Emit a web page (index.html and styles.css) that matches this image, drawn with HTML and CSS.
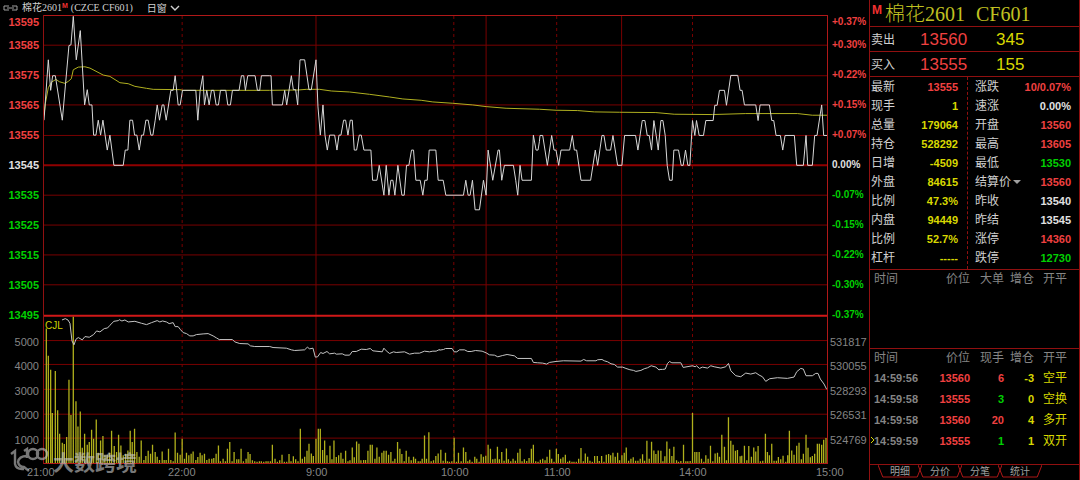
FILE: index.html
```html
<!DOCTYPE html>
<html lang="zh-CN">
<head>
<meta charset="utf-8">
<title>棉花2601 CF601</title>
<link rel="stylesheet" href="styles.css">
</head>
<body>
<div class="app">
  <main class="main">
    <header class="topbar">
      <svg class="link-icon" viewBox="0 0 15 6"><path d="M6 1H1V5H6M9 1H14V5H9M4 3H11"/></svg>
      <h1 class="topbar-title">棉花2601<sup class="flag">M</sup><span>(CZCE CF601)</span></h1>
      <button class="window-menu" type="button">日窗<svg class="chevron" viewBox="0 0 10 6"><path d="M1 1L5 5L9 1"/></svg></button>
    </header>
    <section class="chart">
      <div class="axis axis-left">
        <span class="up">13595</span><span class="up">13585</span><span class="up">13575</span><span class="up">13565</span><span class="up">13555</span><span class="flat">13545</span><span class="down">13535</span><span class="down">13525</span><span class="down">13515</span><span class="down">13505</span><span class="down">13495</span>
        <span class="vol">5000</span><span class="vol">4000</span><span class="vol">3000</span><span class="vol">2000</span><span class="vol">1000</span>
      </div>
      <div class="plot">
        <svg class="plot-svg" id="plot" viewBox="132 46 2352 1347" preserveAspectRatio="none">
          <path class="grid" d="M132 134H2484M132 226H2484M132 314H2484M132 406H2484M132 586H2484M132 676H2484M132 766H2484M132 856H2484M132 1024H2484M132 1096H2484M132 1171H2484M132 1246H2484M132 1318H2484M949 46V1393M1460 46V1393M1867 46V1393"/>
          <path class="hours" d="M547 46V1393M1363 46V1393M1672 46V1393M2080 46V1393"/>
          <path class="mid" d="M132 496H2484"/>
          <path class="frame" d="M132 949H2484"/>
        </svg>
        <span class="indicator">CJL</span>
      </div>
      <div class="axis axis-right">
        <span class="up">+0.37%</span><span class="up">+0.30%</span><span class="up">+0.22%</span><span class="up">+0.15%</span><span class="up">+0.07%</span><span class="flat">0.00%</span><span class="down">-0.07%</span><span class="down">-0.15%</span><span class="down">-0.22%</span><span class="down">-0.30%</span><span class="down">-0.37%</span>
        <span class="vol">531817</span><span class="vol">530055</span><span class="vol">528293</span><span class="vol">526531</span><span class="vol">524769</span>
      </div>
    </section>
    <footer class="times"><span>21:00</span><span>22:00</span><span>9:00</span><span>10:00</span><span>11:00</span><span>14:00</span><span>15:00</span></footer>
    <div class="watermark">
      <svg class="mark" viewBox="0 0 40 28"><path d="M2 7L6 4V17Q7 22 13 22H15M18 9Q10 9 9 15Q10 20 15 20L20 24M15 4L18 2V11"/><circle cx="24" cy="7" r="5"/><circle cx="33" cy="7" r="5"/></svg>
      <span>大数跨境</span>
    </div>
  </main>
  <aside class="side">
    <h2 class="contract"><sup class="flag">M</sup><span>棉花2601</span><span>CF601</span></h2>
    <div class="book"><span>卖出</span><b class="up">13560</b><b class="qty">345</b></div>
    <div class="book"><span>买入</span><b class="up">13555</b><b class="qty">155</b></div>
    <div class="quotes">
      <dl class="col">
        <div><dt>最新</dt><dd class="up">13555</dd></div>
        <div><dt>现手</dt><dd class="qty">1</dd></div>
        <div><dt>总量</dt><dd class="qty">179064</dd></div>
        <div><dt>持仓</dt><dd class="qty">528292</dd></div>
        <div><dt>日增</dt><dd class="qty">-4509</dd></div>
        <div><dt>外盘</dt><dd class="qty">84615</dd></div>
        <div><dt>比例</dt><dd class="qty">47.3%</dd></div>
        <div><dt>内盘</dt><dd class="qty">94449</dd></div>
        <div><dt>比例</dt><dd class="qty">52.7%</dd></div>
        <div><dt>杠杆</dt><dd class="qty">-----</dd></div>
      </dl>
      <dl class="col">
        <div><dt>涨跌</dt><dd class="up">10/0.07%</dd></div>
        <div><dt>速涨</dt><dd class="flat">0.00%</dd></div>
        <div><dt>开盘</dt><dd class="up">13560</dd></div>
        <div><dt>最高</dt><dd class="up">13605</dd></div>
        <div><dt>最低</dt><dd class="down">13530</dd></div>
        <div><dt><button class="settle" type="button">结算价<svg class="caret" viewBox="0 0 8 4"><path d="M0 0H8L4 4Z"/></svg></button></dt><dd class="up">13560</dd></div>
        <div><dt>昨收</dt><dd class="flat">13540</dd></div>
        <div><dt>昨结</dt><dd class="flat">13545</dd></div>
        <div><dt>涨停</dt><dd class="up">14360</dd></div>
        <div><dt>跌停</dt><dd class="down">12730</dd></div>
      </dl>
    </div>
    <div class="panel">
      <table class="ticks">
        <thead><tr><th>时间</th><th>价位</th><th>大单</th><th>增仓</th><th>开平</th></tr></thead>
      </table>
    </div>
    <div class="panel panel-ticks">
      <table class="ticks">
        <thead><tr><th>时间</th><th>价位</th><th>现手</th><th>增仓</th><th>开平</th></tr></thead>
        <tbody>
          <tr><td>14:59:56</td><td class="up">13560</td><td class="up">6</td><td class="qty">-3</td><td class="qty">空平</td></tr>
          <tr><td>14:59:58</td><td class="up">13555</td><td class="down">3</td><td class="qty">0</td><td class="qty">空换</td></tr>
          <tr><td>14:59:58</td><td class="up">13560</td><td class="up">20</td><td class="qty">4</td><td class="qty">多开</td></tr>
          <tr class="current"><td>14:59:59<svg class="pointer" viewBox="0 0 5 8"><path d="M1 1L4 4L1 7"/></svg></td><td class="up">13555</td><td class="down">1</td><td class="qty">1</td><td class="qty">双开</td></tr>
        </tbody>
      </table>
    </div>
    <nav class="tabs">
      <button class="tab" type="button"><svg viewBox="0 0 46 13" preserveAspectRatio="none"><path d="M0 0L5 12H41L46 0"/></svg>明细</button>
      <button class="tab" type="button"><svg viewBox="0 0 46 13" preserveAspectRatio="none"><path d="M0 0L5 12H41L46 0"/></svg>分价</button>
      <button class="tab" type="button"><svg viewBox="0 0 46 13" preserveAspectRatio="none"><path d="M0 0L5 12H41L46 0"/></svg>分笔</button>
      <button class="tab" type="button"><svg viewBox="0 0 46 13" preserveAspectRatio="none"><path d="M0 0L5 12H41L46 0"/></svg>统计</button>
    </nav>
  </aside>
</div>
<script src="chart.js"></script>
</body>
</html>
```
FILE: styles.css
```css
* { box-sizing: border-box; }

body {
  margin: 0;
  background: #000;
  color: #d0d0d0;
  font: 11px/14px "Liberation Sans", "Noto Sans CJK SC", sans-serif;
}

h1, h2, dl, dd { margin: 0; }
button {
  margin: 0;
  padding: 0;
  border: 0;
  background: none;
  color: inherit;
  font: inherit;
}
svg { fill: none; }

.up { color: #f04040; }
.down { color: #00d000; }
.flat { color: #e0e0e0; }
.qty { color: #d8d800; }
.flag { color: #f03030; }

.app {
  display: grid;
  grid-template-columns: minmax(0, 1fr) 211px;
  min-height: 100vh;
}

.main {
  position: relative;
  display: flex;
  flex-direction: column;
}

.topbar {
  display: flex;
  align-items: center;
  height: 15px;
  padding-left: 3px;
}
.link-icon { width: 15px; height: 6px; stroke: #a0a0a0; }
.topbar-title {
  display: flex;
  margin-left: 4px;
  font: 10px/14px "Liberation Serif", "Noto Sans CJK SC", serif;
}
.topbar-title .flag {
  margin-right: 3px;
  font: bold 7px/10px "Liberation Sans", sans-serif;
}
.window-menu {
  display: flex;
  align-items: center;
  gap: 3px;
  margin-left: 14px;
  font: 10px/14px "Noto Sans CJK SC", sans-serif;
}
.chevron { width: 10px; height: 6px; stroke: #d0d0d0; stroke-width: 1.4; }

.chart {
  flex: 1;
  display: grid;
  grid-template-columns: 44px minmax(0, 1fr) 41px;
}
.axis {
  display: grid;
  grid-template-rows: 15fr repeat(10, 30fr) repeat(5, 24.5fr) 12fr;
  align-items: center;
  font-weight: bold;
  line-height: 12px;
}
.axis-left { padding-right: 5px; text-align: right; }
.axis-right { padding-left: 4px; font-size: 10px; }
.vol { color: #858585; font-size: 11px; font-weight: normal; }
.axis-right .vol { margin-left: -2px; }

.plot {
  position: relative;
  border: solid #b01818;
  border-width: 1px 1px 1px 0;
  box-shadow: -1px 0 #901010;
}
.plot-svg { position: absolute; width: 100%; height: 100%; }
.plot-svg path, .plot-svg polyline { vector-effect: non-scaling-stroke; }
.grid { stroke: #780000; }
.hours { stroke: #780000; stroke-dasharray: 3 3; }
.mid { stroke: #900000; stroke-width: 2; }
.frame { stroke: #d01818; stroke-width: 2; }
.bars { stroke: #b0b01c; stroke-width: 1.3; }
.price { stroke: #d8d8d8; }
.interest { stroke: #c4c4c4; }
.average { stroke: #b0b020; }
.indicator {
  position: absolute;
  top: 68%;
  left: 1px;
  color: #d0d000;
  font: 10px/12px "Liberation Sans", sans-serif;
}

.times {
  display: grid;
  grid-template-columns: 141fr 138fr 135fr 103fr 135fr 137fr 53fr;
  height: 16px;
  padding-left: 27px;
  color: #858585;
  line-height: 17px;
}

.watermark {
  position: absolute;
  bottom: 5px;
  left: 9px;
  display: flex;
  align-items: center;
  gap: 4px;
  color: #c8c8c8;
  font: bold 21px/28px "Noto Sans CJK SC", sans-serif;
  opacity: 0.6;
}
.mark { width: 40px; height: 28px; stroke: #c8c8c8; stroke-width: 2.4; }

.side {
  display: grid;
  grid-template-rows: 26px 25px 25px 193px 79px 1fr 15px;
  border: solid #901010;
  border-width: 0 1px;
}
.contract {
  display: flex;
  align-items: center;
  padding-top: 2px;
  color: #c0c020;
  font: 20px/24px "Liberation Serif", "Noto Sans CJK SC", serif;
  font-weight: 300;
}
.contract span + span { margin-left: 11px; }
.contract .flag {
  align-self: flex-start;
  width: 15px;
  padding: 2px 0 0 2px;
  font: bold 12px/12px "Liberation Sans", sans-serif;
}
.book {
  display: grid;
  grid-template-columns: 49px 76px 1fr;
  align-items: center;
  padding: 2px 0 0 1px;
  border-top: 1px solid #901010;
  font-size: 12px;
}
.book b { font-size: 17px; font-weight: normal; }

.quotes {
  display: grid;
  grid-template-columns: 97px 1fr;
  border-top: 1px solid #901010;
}
.col { display: flex; flex-direction: column; padding: 0 9px 1px 1px; }
.col + .col { padding: 0 8px 1px 7px; border-left: 1px dashed #901010; }
.col div {
  flex: 1;
  display: flex;
  align-items: center;
  justify-content: space-between;
}
.col dt { font-size: 12px; }
.col dd { font-weight: bold; }
.settle { display: flex; align-items: center; gap: 2px; }
.caret { width: 8px; height: 4px; fill: #a0a0a0; }

.panel { border-top: 1px solid #901010; }
.panel-ticks { border-bottom: 1px solid #901010; }
.ticks {
  width: 100%;
  border-collapse: collapse;
  table-layout: fixed;
  color: #858585;
}
.ticks th, .ticks td { height: 21px; padding: 0; text-align: right; }
.ticks th { height: 18px; font-size: 12px; font-weight: normal; }
.ticks td { font-weight: bold; }
.ticks th:nth-child(1) { width: 60px; }
.ticks th:nth-child(2) { width: 40px; }
.ticks th:nth-child(3) { width: 34px; }
.ticks th:nth-child(4) { width: 30px; }
.ticks tr > :nth-child(1) { padding-left: 4px; text-align: left; }
.ticks tr > :nth-child(5) { padding-right: 12px; font-size: 12px; font-weight: normal; }
.current td:first-child { position: relative; }
.pointer {
  position: absolute;
  top: 6px;
  left: 0;
  width: 5px;
  height: 8px;
  stroke: #d8d800;
}

.tabs { display: flex; align-items: flex-start; padding-left: 8px; }
.tab {
  position: relative;
  width: 44px;
  height: 14px;
  margin-right: -4px;
  color: #a0a0a0;
  font-size: 10px;
  line-height: 12px;
}
.tab svg {
  position: absolute;
  inset: 0;
  width: 100%;
  height: 13px;
  stroke: #b01818;
}
```
FILE: chart.js
```js
const plot = document.getElementById("plot");
const SVG_NS = "http://www.w3.org/2000/svg";

// Each block covers one stretch of the session, starting at (x, y) in plot units.
const price = [
  { x: 0, y: 0, points: "132,360 145,178 152,270 158,226 166,226 187,360 207,135 213,133 220,47 229,178 241,90 254,314 262,268 268,314 276,314 281,405 288,405 295,360 302,405 309,360 322,450 330,405 342,496 370,496 376,450 384,450 390,360 398,360 404,405 411,405 418,450 425,405 431,405 438,360 445,360 453,405 459,405 466,360 472,314 479,360 487,314 492,314 499,360 513,270 520,270 526,226 535,314 541,314 548,270 588,270 594,360 601,270 609,226 614,314 621,270 628,314 635,270 642,270 649,314 656,314 662,270 678,270 684,314 692,314 698,270 718,270 725,226 732,226 737,270 744,226 766,226 773,270 780,270 785,226 810,226" },
  { x: 810, y: 0, points: "0,226 4,226 8,314 38,314 45,270 51,314 65,226 71,268 78,268 84,314 91,178 105,178 118,268 125,268 139,178 145,320 152,405 160,314 166,405 173,450 180,405 195,405 202,450 208,405 214,405 222,360 228,360 235,405 242,360 248,360 254,450 261,450 269,405 275,405 283,450 304,450 309,541 322,541 329,496 343,586 350,496 358,586 364,541 370,541 376,586 385,496 397,586 404,586 411,496 418,496 426,450 432,450 439,541 452,541 460,586 466,541 473,541 479,450 499,450 506,541 521,541 529,586 582,586 589,541 596,586 602,586 609,541 617,630 630,630 642,541 650,586 656,450 670,541 686,450 690,450 697,541 705,496 732,496 739,541 745,586 752,496 758,541 786,541 792,405 800,450 806,450 810,425" },
  { x: 1620, y: 180, points: "0,245 2,226 10,226 24,316 37,226 44,270 50,270 58,316 65,270 91,270 99,226 105,270 112,270 125,361 154,361 161,316 168,270 175,316 188,226 194,226 201,270 214,270 221,226 235,316 248,316 256,226 289,226 296,270 309,181 317,181 324,226 330,226 337,270 344,181 351,226 357,270 365,181 371,181 378,226 384,316 391,361 399,361 404,270 418,270 426,316 432,316 439,270 446,316 452,316 460,181 467,226 472,181 480,226 493,226 500,181 522,181 527,135 534,135 541,90 556,90 562,135 575,45 596,45 603,90 609,90 616,134 650,134 657,181 663,134 691,134 698,181 704,181 711,226 724,226 731,270 738,226 766,226 773,316 793,316 801,226 806,316 820,316 827,226 834,226 848,134 854,226 864,226" }
];

const average = [
  { x: 0, y: 0, points: "132,345 136,310 145,262 155,245 168,237 178,244 195,249 205,243 214,235 220,208 235,200 255,199 270,203 310,224 330,228 360,247 385,250 405,258 440,264 460,267 540,268 550,270 810,270" },
  { x: 810, y: 0, points: "0,270 85,269 110,267 150,267 185,272 240,275 300,282 360,290 400,296 455,300 490,305 550,309 610,314 650,319 710,324 810,327" },
  { x: 1620, y: 180, points: "0,147 50,150 115,151 165,155 240,156 350,157 405,162 520,163 620,160 775,160 820,165 864,165" }
];

const interest = [
  { x: 0, y: 900, points: "186,62 196,58 204,62 210,72 216,125 222,137 228,120 235,115 247,122 255,112 268,114 281,106 290,95 300,98 313,88 323,86 330,78 342,66 355,64 358,61 366,65 375,62 385,68 405,66 425,72 440,76 455,70 472,64 480,68 488,65 500,68 508,73 520,70 526,82 535,82 541,90 550,100 560,103 570,110 580,110 590,106 610,104 625,103 640,110 650,116 660,122" },
  { x: 660, y: 930, points: "0,91 38,91 45,98 60,103 85,104 92,110 105,112 150,112 160,115 200,117 215,122 225,124 255,122 263,114 270,119 280,117 287,144 294,143 303,130 310,133 322,127 330,134 345,132 350,135 368,134 376,138 390,138 398,127 410,127 425,120 440,121 452,118 460,125 488,128 493,117 500,125 510,133 522,128 530,130 555,128 570,135 585,132 600,132 615,126 630,128 640,126 650,126 660,121" },
  { x: 1320, y: 930, points: "0,123 12,121 18,118 38,118 44,128 52,128 60,122 75,122 85,127 95,127 108,124 128,126 140,131 150,137 165,138 175,143 190,139 203,136 225,140 235,148 276,148 282,160 295,161 310,162 322,165 330,160 350,157 372,155 425,156 433,151 442,155 470,155 475,152 488,151 495,155 505,158 515,164 525,166 535,174 550,174 560,178 572,182 583,184 590,187 605,184 615,179 625,176 636,170 650,174 660,183" },
  { x: 1980, y: 930, points: "0,181 10,181 18,180 25,163 31,157 38,161 65,161 72,175 100,170 108,173 112,170 121,178 130,174 145,177 155,170 165,173 185,177 200,173 208,163 215,185 230,200 245,203 260,192 275,195 290,191 300,198 310,203 320,217 332,209 355,206 385,208 405,204 413,188 425,178 433,180 441,200 460,200 470,193 477,193 484,210 495,225 503,241" }
];

const volume = [
  { x: 0, y: 900, points: "139,88 145,170 152,212 157,342 166,216 173,334 179,405 187,432 193,436 200,415 207,242 213,348 220,52 228,307 234,383 241,338 247,447 254,405 262,438 268,430 275,393 281,420 289,362 295,462 302,425 309,412 315,470 322,468 329,462 335,396 343,442 350,460 356,408 363,440 370,470 377,465 384,455 391,396 397,430 404,390 411,460 418,474 424,425 432,484 438,472 445,456 452,465 458,438 466,460 472,474 479,484 487,458 493,484 499,484 506,450 513,484 520,488 526,401 533,462 541,468 547,420 554,480 560,462 567,470 574,465 580,458 588,484 594,475 601,462 607,470 614,465 621,484 628,480 636,480 642,478 649,465 656,440" },
  { x: 660, y: 930, points: "2,458 10,450 17,458 23,420 30,400 37,458 43,430 51,452 57,452 64,420 71,458 79,450 85,430 91,436 98,455 105,458 112,459 119,458 125,458 132,459 139,458 145,458 152,458 158,408 166,450 173,459 180,455 187,438 194,459 201,459 208,436 214,458 221,443 228,452 235,458 242,360 248,450 255,444 262,426 268,405 275,434 281,442 289,390 296,360 302,360 309,424 315,395 322,440 331,411 337,452 343,395 350,445 357,440 364,432 370,450 378,426 385,458 391,455 398,416 404,446 411,398 418,405 424,455 432,454 438,454 445,426 452,408 458,408 466,450 472,416 479,444 487,432 493,426 500,426 507,438 514,430 520,458 526,450 534,400 541,420 547,436 554,458 560,426 568,444 575,455 582,444 588,450 596,458 602,458 608,450 615,380 621,450 628,370 635,458 642,455 649,442 656,434" },
  { x: 1320, y: 930, points: "4,423 11,456 18,432 24,458 30,459 37,458 44,387 51,459 57,432 65,458 72,416 79,430 85,458 91,453 98,459 106,444 112,450 119,459 125,437 132,444 139,441 146,408 153,420 160,452 167,450 174,414 180,452 187,430 194,456 201,419 207,452 214,458 221,450 228,456 235,432 242,420 248,458 255,452 262,457 269,448 276,420 282,408 289,458 296,459 303,453 310,450 317,455 323,444 331,423 337,450 344,459 351,420 357,436 364,450 371,446 378,438 385,459 391,456 398,459 404,459 411,459 418,450 425,418 432,458 438,434 445,444 452,456 459,459 466,442 474,442 480,457 487,442 494,459 501,438 508,436 514,440 521,432 528,444 535,432 541,455 548,440 555,432 561,416 568,456 575,450 582,446 589,456 596,456 603,450 610,437 616,456 623,396 630,450 637,399 644,425 650,436 657,425" },
  { x: 1980, y: 930, points: "5,426 11,458 17,443 23,398 31,420 38,442 44,414 52,455 58,459 65,457 73,408 80,458 86,458 93,457 100,312 107,430 113,430 120,430 127,450 134,459 140,440 147,450 154,411 161,458 168,434 175,432 181,444 188,378 196,414 202,455 208,325 215,396 222,408 229,426 235,424 243,443 248,441 256,411 263,455 269,412 277,444 284,416 290,428 297,412 304,458 311,456 319,375 325,430 331,440 338,405 345,456 352,456 358,445 365,452 372,441 380,459 386,440 391,366 398,425 405,438 413,411 420,402 427,452 433,435 441,378 447,417 454,446 460,442 467,435 475,405 481,405 488,408 494,393 501,388" }
];

const BASELINE = 1393;

function toPoints(blocks) {
  return blocks.flatMap(b => b.points.split(" ").map(p => {
    const [x, y] = p.split(",").map(Number);
    return [b.x + x, b.y + y];
  }));
}

function add(tag, cls, attr, value) {
  const el = document.createElementNS(SVG_NS, tag);
  el.setAttribute("class", cls);
  el.setAttribute(attr, value);
  plot.append(el);
}

add("path", "bars", "d", toPoints(volume).map(([x, y]) => `M${x} ${BASELINE}V${y}`).join(""));
add("polyline", "interest", "points", toPoints(interest).join(" "));
add("polyline", "average", "points", toPoints(average).join(" "));
add("polyline", "price", "points", toPoints(price).join(" "));
```
